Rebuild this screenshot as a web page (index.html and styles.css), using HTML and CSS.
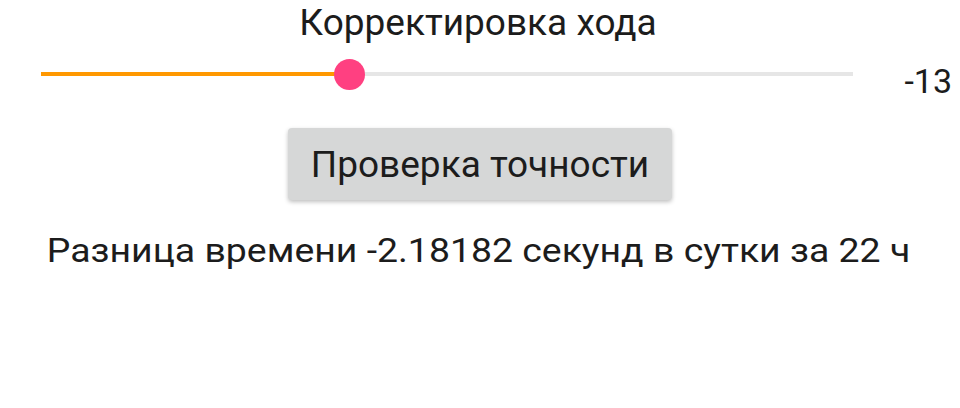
FILE: index.html
```html
<!DOCTYPE html>
<html lang="ru">
<head>
    <meta charset="UTF-8">
    <title>Корректировка хода</title>
    <link rel="stylesheet" href="styles.css">
</head>
<body>
    <div class="screen">
        <div class="title">Корректировка хода</div>

        <div class="slider-row">
            <div class="track">
                <div class="fill" style="width: 38.05%"></div>
                <div class="thumb" style="left: 38.05%"></div>
            </div>
            <div class="value">-13</div>
        </div>

        <button class="check-btn">Проверка точности</button>

        <div class="result">Разница времени -2.18182 секунд в сутки за 22 ч</div>
    </div>
</body>
</html>
```

FILE: styles.css
```css
body {
    margin: 0;
    background: #ffffff;
    font-family: Roboto, "Noto Sans", sans-serif;
    color: #1c1c1c;
}
.screen {
    width: 960px;
    height: 408px;
    display: flex;
    flex-direction: column;
    align-items: center;
}
.title {
    font-size: 37px;
    line-height: 44px;
    margin: 1px 0 0 -4px;
}
.slider-row {
    width: 100%;
    display: flex;
    align-items: flex-start;
    margin-top: 13px;
}
.track {
    position: relative;
    margin: 14px 0 0 41px;
    width: 812px;
    height: 4px;
    background: #e6e6e6;
}
.fill {
    height: 100%;
    background: #ff9800;
}
.thumb {
    position: absolute;
    top: 50%;
    width: 31px;
    height: 31px;
    margin: -15px 0 0 -15.5px;
    border-radius: 50%;
    background: #ff4081;
}
.value {
    margin: 3px 8px 0 auto;
    font-size: 34px;
    line-height: 40px;
}
.check-btn {
    margin-top: 27px;
    width: 384px;
    height: 72px;
    padding: 0;
    border: none;
    border-radius: 4px;
    background: #d6d7d7;
    box-shadow: 0 2px 4px rgba(0,0,0,0.25);
    font-family: inherit;
    font-size: 37px;
    color: #1c1c1c;
}
.result {
    margin: 30px 0 0 -4px;
    font-size: 34px;
    line-height: 40px;
    transform: scaleX(1.1);
}
```
